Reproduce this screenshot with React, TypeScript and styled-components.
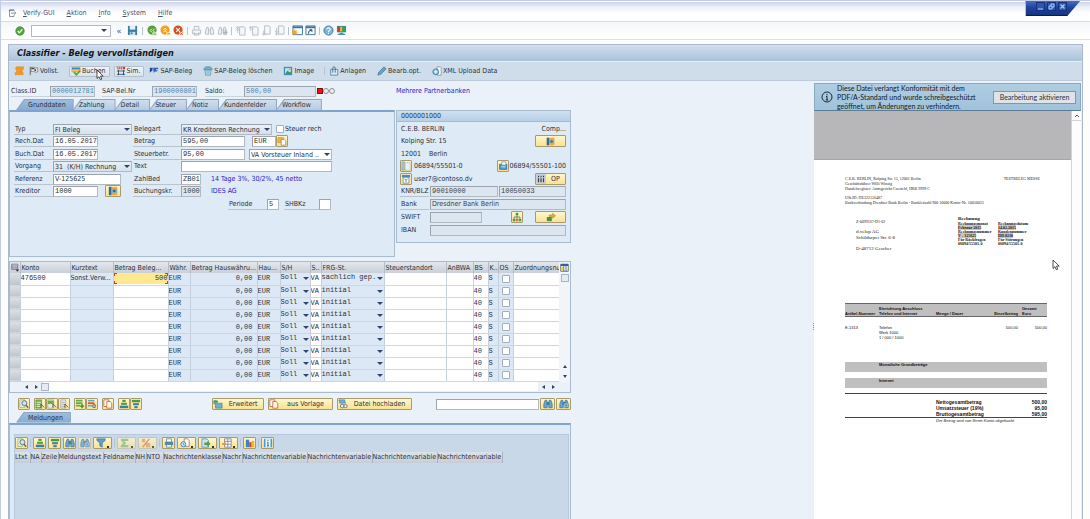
import React from "react";
import styled, { createGlobalStyle, css } from "styled-components";

const UI = `"DejaVu Sans Condensed", "Noto Sans", sans-serif`;
const MONO = `"Liberation Mono", monospace`;
const PANEL = "#deeaf6";
const LINE = "#a9bccf";
const YELLOW = "linear-gradient(#fff6cf, #f8e391)";

const Global = createGlobalStyle`
  *, *::before, *::after { box-sizing: border-box; }
  body { margin: 0; background: #fff; font: 7px/10px ${UI}; color: #2b3038; }
  button, input, select { font: inherit; color: inherit; margin: 0; padding: 0; border: 0; border-radius: 0; background: none; }
  a { color: inherit; text-decoration: none; }
`;

/* ---------- icons ---------- */

const icons: Record<string, React.ReactNode> = {
  menu: <><path d="M8 3V1H2v9h6V8" fill="none" stroke="#66748c" /><path d="M4 5.500h6M8.500 3.500l2 2-2 2" fill="none" stroke="#66748c" /><path d="M1 2h6" stroke="#66748c" /></>,
  ok: <><circle cx="6" cy="6" r="5" fill="#4fa83a" stroke="#3c8a2c" /><path d="M3.200 6l2 2.200 3.600-4.200" fill="none" stroke="#fff" strokeWidth="1.600" /></>,
  save: <><path d="M1 1h10v10H1z" fill="#3d7ea6" /><path d="M3 1h6v4H3z" fill="#e8f3fa" /><path d="M3 7.500h6V11H3z" fill="#cfe0ea" /><path d="M4 8h2v2H4z" fill="#3d7ea6" /></>,
  back: <><circle cx="5.500" cy="5.500" r="5" fill="#55a32f" /><path d="M5.500 4L3.500 6l2 2M8.500 4l-2 2 2 2" stroke="#fff" fill="none" /><path d="M6 8h5v3.500H6z" fill="#dff0d4" /><path d="M7 10h3" stroke="#55a32f" /></>,
  exit: <><circle cx="5.500" cy="5.500" r="5" fill="#f0a01e" /><path d="M3.500 5.500l2-2 2 2M3.500 8l2-2 2 2" stroke="#fff" fill="none" /><path d="M7 8h4.500v3.500H7z" fill="#fde9c0" /><path d="M8 9.500h3" stroke="#e08a10" /></>,
  cancel: <><circle cx="5.500" cy="5.500" r="5" fill="#d8501e" /><path d="M3.500 3.500l4 4M7.500 3.500l-4 4" stroke="#fff" strokeWidth="1.200" /><path d="M7 7.500h4.500v4H7z" fill="#fbe2d6" /><path d="M8 8.500l2.500 2M10.500 8.500l-2.500 2" stroke="#d8501e" /></>,
  printGrey: <><path d="M3.500 5V1.500h5V5M1.500 5.500h9v4h-9zM3.500 8v3h5V8" fill="#f4f5f7" stroke="#b5bac2" /></>,
  findGrey: <path d="M3 2.500h1.500l.5 3v4.500H1.500V7zM7.500 2.500H9L10.500 7v3H7V5.500zM5 5.500h2" fill="#eef0f3" stroke="#b5bac2" />,
  findNextGrey: <><path d="M3 2.500h1.500l.5 3v4.500H1.500V7zM7.500 2.500H9L10.500 7v3H7V5.500zM5 5.500h2" fill="#eef0f3" stroke="#b5bac2" /><path d="M9 5v6M6.500 8h5" stroke="#a4abb5" /></>,
  pgFirst: <><path d="M5 2h5l1 1v8H5z" fill="#f6f7f9" stroke="#b5bac2" /><path d="M3 1.500v7M1 3.500l2-2 2 2M1 6l2-2 2 2" stroke="#b5bac2" fill="none" /></>,
  pgUp: <><path d="M5 2h5l1 1v8H5z" fill="#f6f7f9" stroke="#b5bac2" /><path d="M3 1.500v5M1 3.500l2-2 2 2" stroke="#b5bac2" fill="none" /></>,
  pgDown: <><path d="M4 1h5l1 1v8H4z" fill="#f6f7f9" stroke="#b5bac2" /><path d="M3 6v5M1 9l2 2 2-2" stroke="#b5bac2" fill="none" /></>,
  pgLast: <><path d="M5 1h5l1 1v8H5z" fill="#f6f7f9" stroke="#b5bac2" /><path d="M3 3v8M1 6.500l2 2 2-2M1 9l2 2 2-2" stroke="#b5bac2" fill="none" /></>,
  session: <><path d="M1 1h10.500v9.500H1z" fill="#f5f9fc" stroke="#3d7494" /><path d="M1 1.500h10.500v2H1z" fill="#3d7494" /><path d="M3 5v6M0 8h6M1 6l4 4M5 6l-4 4" stroke="#f2a21c" strokeWidth="1.100" /></>,
  shortcut: <><path d="M1 1h10v9.500H1z" fill="#f5f9fc" stroke="#3d7494" /><path d="M1 1.500h10v2H1z" fill="#3d7494" /><path d="M4 9.500V7l3-1.500M5 5.200h2.500v2.300" stroke="#333" fill="none" /></>,
  help: <><circle cx="6" cy="6" r="5" fill="#7fb1d4" stroke="#3f7ea8" /><path d="M4.200 4.800c0-2.400 3.800-2.200 3.600.2-.1 1.200-1.800 1.200-1.800 2.500M6 8.500v1.300" stroke="#fff" strokeWidth="1.200" fill="none" /></>,
  monitor: <><path d="M1 1h10v7H1z" fill="#3b8f8c" /><path d="M2 2h2.500v5H2z" fill="#d23a2a" /><path d="M4.500 2H7v5H4.500z" fill="#f4b72a" /><path d="M7 2h3v5H7z" fill="#3f9c4a" /><path d="M4 8.500h4v1h2V11H2V9.500h2z" fill="#4d8fa5" /></>,
  scroll: <path d="M3 1h8.500v3H10v4h1v2.500H1.500L1 8h2V4H2V2z" fill="#f2991f" stroke="#d97d10" strokeWidth=".5" />,
  flag: <><path d="M1.500 1v10" stroke="#555" /><path d="M2.500 1.500h3l3 1 2-.5v5l-2 .5-3-1h-3z" fill="#f2f2f2" stroke="#555" strokeWidth=".7" /><path d="M3 2h2v2H3zM6.500 4h2v2h-2zM5 2.500h1.500V4H5z" fill="#444" /></>,
  post: <><path d="M1 2h10v5H1z" fill="#f5c451" stroke="#b8902c" strokeWidth=".6" /><path d="M1 2h10v2H1z" fill="#4a87b5" /><path d="M3.500 7l3 3.500 4.500-5" fill="none" stroke="#5aa62f" strokeWidth="2" /></>,
  sim: <><path d="M1 1h10v3H1z" fill="#c23b33" /><path d="M2.500 1v3M5 1v3M7.500 1v3" stroke="#fff" /><path d="M1 6h10M1 10h10" stroke="#2f6fa5" strokeWidth="1.200" /><path d="M3 5v6M9 5v6" stroke="#333" /></>,
  bf: <><path d="M1 2h3.500l-.5 3.500L1 8z" fill="#20479a" /><path d="M5 2h6v2H8.500v1H10v1.500H7L5.500 8.500z" fill="#2f62b8" /></>,
  trash: <><path d="M1 3l2.500-2h5L11 3v1.500H1z" fill="#72b0cc" stroke="#3f87a6" strokeWidth=".7" /><path d="M2.500 5h7L9 11H3z" fill="#cfe6f0" stroke="#3f87a6" strokeWidth=".8" /><path d="M5 6v4M7 6v4" stroke="#3f87a6" strokeWidth=".7" /></>,
  image: <><path d="M1 1h10v10H1z" fill="#3e8fc0" /><path d="M2.500 2.500h7v7h-7z" fill="#bfe2f3" /><path d="M2.500 9.500l3-4 2 2 2-1v3z" fill="#3d9b45" /><circle cx="8" cy="4" r="1.200" fill="#f5a623" /></>,
  clip: <><path d="M2 4h8.500v7H2z" fill="#d8e9f3" stroke="#4a86a8" /><path d="M4.500 8V2.500a1.500 1.500 0 013 0V8" fill="none" stroke="#47698a" /></>,
  pencil: <path d="M1 11l1-3.500L8.500 1 11 3.500 4.500 10z" fill="#5fa4c8" stroke="#33708f" strokeWidth=".7" />,
  xml: <><path d="M6 1h4l1 1v9H6z" fill="#fff" stroke="#777" strokeWidth=".8" /><circle cx="4.500" cy="7" r="3.500" fill="#8fc2dd" stroke="#34789b" /><path d="M2.500 7h4M4.500 5v4" stroke="#fff" /></>,
  match: <><path d="M1 1h10v10H1z" fill="#f3a73b" /><path d="M1 1h3v10H1z" fill="#2f6d98" /><path d="M4 2l4 4-4 4zM11 2L8 6l3 4z" fill="#79b2d4" /><circle cx="7.500" cy="6" r="1.700" fill="#356f95" /></>,
  paste: <><path d="M1 2h7v6H1z" fill="#f4b43c" stroke="#c7861c" strokeWidth=".7" /><path d="M5 4h3.500L10.500 6v5H5z" fill="#fff" stroke="#777" strokeWidth=".8" /></>,
  phone: <><path d="M1 1h3v10H1z" fill="#a9c3d4" stroke="#78909f" strokeWidth=".6" /><path d="M5 2h6v9H5z" fill="#eaf1f5" stroke="#9aabb5" strokeWidth=".6" /></>,
  fax: <><path d="M2 4h8.500v6H2z" fill="#5b9cc2" stroke="#2f6f94" /><path d="M4.500 1h5v4h-5z" fill="#f6fbfd" stroke="#4f7f99" strokeWidth=".7" /><path d="M4 7h5" stroke="#e4f2f9" /></>,
  mail: <><path d="M1 1h10v3H1z" fill="#4f8fae" /><path d="M2.500 4h7v7h-7z" fill="#fff" stroke="#48788f" strokeWidth=".8" /><path d="M4 5.500l2 2 2-2M6 7.500V10" stroke="#3d7a9c" fill="none" /></>,
  bars: <><path d="M0 0h12v12H0z" fill="#c8cfd8" /><path d="M3 2v2M6 2v2M9 2v2M3 5v5M6 5v5M9 5v5" stroke="#333c4a" strokeWidth="1.400" /></>,
  tree: <><path d="M4.500 1h3v3h-3z" fill="#3e9b4c" /><path d="M6 4v2M2.500 8V6h7v2M6 6v2" stroke="#555" fill="none" strokeWidth=".8" /><path d="M1 8h3v3H1zM8 8h3v3H8z" fill="#3e9b4c" /><path d="M4.800 8h2.400v3H4.800z" fill="#d9703a" /></>,
  goto: <><path d="M1 6h6v5H1z" fill="#4e8f45" /><path d="M4 5h4V3l3.500 3L8 9V7H4z" fill="#f1ae26" stroke="#7f7420" strokeWidth=".5" transform="translate(0 -1.500)" /></>,
  magnifier: <><path d="M1 1h6v9H1z" fill="#e4f0da" stroke="#6c9a55" strokeWidth=".6" /><circle cx="6.500" cy="5" r="3" fill="#cde3ee" stroke="#55666f" /><path d="M8.500 7.500L11 10.500" stroke="#55666f" strokeWidth="1.500" /></>,
  selAll: <><path d="M1 1h7v10H1z" fill="#78b64f" stroke="#4f8a2e" strokeWidth=".6" /><path d="M2 4h5M2 6.500h5M2 9h5" stroke="#e8f5dd" /><path d="M7 6l4 4M7 6v4.500" stroke="#555" fill="none" /></>,
  selBlock: <><path d="M1 1h7v10H1z" fill="#e8eee2" stroke="#7f8a77" strokeWidth=".6" /><path d="M1 2h7v4H1z" fill="#6db03f" /><path d="M7 6l4 4M7 6v4.500" stroke="#555" fill="none" /></>,
  deselect: <><path d="M2 1h6v10H2z" fill="#e3e6e4" stroke="#8b9190" strokeWidth=".6" /><path d="M3 4h4M3 6.500h4M3 9h4" stroke="#a6adac" /><path d="M7 6l4 4M7 6v4.500" stroke="#555" fill="none" /></>,
  insRow: <><path d="M1 1h8v2H1zM1 4h8v2H1zM1 7h5v2H1z" fill="#69a848" /><path d="M8.500 6v5M6 8.500h5" stroke="#3c8a2c" strokeWidth="1.600" /></>,
  delRow: <><path d="M1 1h8v2H1z" fill="#69a8c0" /><path d="M1 4h8v2H1z" fill="#d8552c" /><path d="M1 7h5v2H1z" fill="#69a8c0" /><circle cx="8.500" cy="8.500" r="2.500" fill="#777" /><path d="M7 8.500h3" stroke="#fff" /></>,
  copy: <><path d="M1 1h6v8H1z" fill="#fff" stroke="#c0562c" strokeWidth=".9" /><path d="M4.500 3h4L10.500 5v6h-6z" fill="#fff8e8" stroke="#c0562c" strokeWidth=".9" /></>,
  sortUp: <><path d="M4 1h4v2.500H4z" fill="#4c9b3c" /><path d="M2.500 4.500h7V7h-7z" fill="#4c9b3c" /><path d="M1 8h10v3H1z" fill="#3f7f9f" /></>,
  sortDown: <><path d="M1 1h10v3H1z" fill="#4c9b3c" /><path d="M2.500 5h7v2.500h-7z" fill="#3f7f9f" /><path d="M4 8.500h4V11H4z" fill="#3f7f9f" /></>,
  find: <path d="M2.500 1.500h2l.5 3v6H1V6zM7.500 1.500h2L11 6v4.500H7v-6zM5 4h2v3H5z" fill="#6fa8cb" stroke="#2f6c93" strokeWidth=".8" />,
  findNext: <><path d="M2.500 1.500h2l.5 3v6H1V6zM7.500 1.500h2L11 6v4.500H7v-6zM5 4h2v3H5z" fill="#6fa8cb" stroke="#2f6c93" strokeWidth=".8" /><circle cx="8.500" cy="7.500" r="2.800" fill="#e5f1f8" stroke="#2f6c93" strokeWidth=".6" /><path d="M8.500 5.500v4M6.500 7.500h4" stroke="#2f6c93" /></>,
  filter: <path d="M1 1h10v2L7.500 6v5l-3-1.500V6L1 3z" fill="#5d9fc9" stroke="#2f6c93" strokeWidth=".7" />,
  sum: <path d="M1 1h9v2.500H5L7.500 6 5 8.500h5V11H1V9l3-3-3-3z" fill="#8fc07a" />,
  subtotal: <><path d="M1 1h4v4H1zM6 6h5v5H6z" fill="#f0a05a" /><path d="M10 1L2 11" stroke="#d97a3a" strokeWidth="1.500" /></>,
  print: <><path d="M3 1h6v4H3z" fill="#fff" stroke="#3d7494" strokeWidth=".8" /><path d="M1 4.500h10v4H1z" fill="#4d8bae" /><path d="M3 8h6v3H3z" fill="#fff" stroke="#3d7494" strokeWidth=".8" /></>,
  views: <><path d="M5 1h4l2 2v7H5z" fill="#fff" stroke="#667" strokeWidth=".8" /><circle cx="4" cy="7.500" r="3" fill="#d8ebf4" stroke="#3d7494" /><path d="M4 6v2h1.500" stroke="#3d7494" fill="none" strokeWidth=".8" /></>,
  export: <><path d="M1 1h6l2 2v8H1z" fill="#cfe2ee" stroke="#4a7d9c" strokeWidth=".8" /><path d="M4 5.500h3.500v-2L11.500 7l-4 3.500v-2H4z" fill="#4fa03a" /></>,
  layout: <><path d="M3 1h8v10H3z" fill="#fff" stroke="#667" strokeWidth=".8" /><path d="M3 4h8M3 7.500h8M7 1v10" stroke="#667" strokeWidth=".8" /><path d="M0 6h3V4.500L5.500 7 3 9.500V8H0z" fill="#f08f2e" /></>,
  chart: <><path d="M1 2h4v9H1z" fill="#3f85b5" /><path d="M5 5h3v6H5z" fill="#d8452c" /><path d="M8 3.500h3V11H8z" fill="#f4b42d" /></>,
  info: <><path d="M1 1h10v10H1z" fill="#4a9cc7" /><path d="M3 1h6v10H3z" fill="#e7f4fb" /><path d="M6 2v1.600M6 5v4.500M5 5.300h1M4.800 9.500h2.400" stroke="#1f6f9c" strokeWidth="1.200" /></>,
  detail: <><path d="M1 2h3v3h7v6H3V6H1z" fill="#6fb0c6" stroke="#2c7083" strokeWidth=".6" /><path d="M1 2h5v2H1z" fill="#4c9b3c" /></>,
  upload: <><path d="M1 1h7l1 4H2z" fill="#6faed0" stroke="#3d7494" strokeWidth=".6" /><circle cx="5" cy="8.500" r="2.200" fill="#e5f1f8" stroke="#667" /><circle cx="9" cy="8.500" r="2" fill="#e5f1f8" stroke="#667" /></>,
  columns: <><path d="M1 2h10v9H1z" fill="#fff" stroke="#234" strokeWidth=".9" /><path d="M1 1h10v3H1z" fill="#2f5fa8" /><path d="M2 5h2v5H2z" fill="#f3d13c" /><path d="M5 4v7M8 4v7" stroke="#234" strokeWidth=".9" /></>,
  rowList: <><path d="M1 1.500h8v7H1zM1 4h8M1 6.500h8" fill="none" stroke="#555e6c" strokeWidth=".9" /><path d="M6 8.500h5l-2.500 3z" fill="#333" /></>,
};

const Svg = styled.svg<{ $s: number }>`
  display: block;
  flex: none;
  width: ${(p) => p.$s}px;
  height: ${(p) => p.$s}px;
`;
const Icon = ({ n, s = 10 }: { n: string; s?: number }) => (
  <Svg $s={s} viewBox="0 0 12 12" aria-hidden="true">{icons[n]}</Svg>
);

/* ---------- window frame ---------- */

const Window = styled.div`
  position: relative;
  display: flex;
  flex-direction: column;
  min-height: 100vh;
  border-left: 1px solid #c3cbe2;
  border-top: 1px solid #c3cbe6;
  background: #fdfdfe;
  overflow: hidden;
`;
const MenuBar = styled.nav`
  display: flex;
  align-items: center;
  gap: 12px;
  height: 21px;
  padding: 3px 7px 0;
  border-top: 1px solid #fff;
  border-bottom: 1px solid #d9dde6;
  background: linear-gradient(#ccd5ea, #eceff8 25%, #fff 60%);
  color: #46536e;
`;
const MenuButton = styled.button`
  &::first-letter { text-decoration: underline; }
`;
const MenuIcon = styled.span`
  margin-right: -6px;
`;
const StdBar = styled.div`
  display: flex;
  align-items: center;
  height: 18px;
  padding-left: 12px;
  border-bottom: 1px solid #dcdfe4;
  background: linear-gradient(#f4f7fa, #fff);
`;
const ToolButton = styled.button`
  display: grid;
  place-items: center;
  width: 13px;
  height: 12px;
`;
const CommandBox = styled.div`
  display: grid;
  grid-template-columns: 100%;
  align-items: center;
  width: 80px;
  margin: 0 4px 0 5px;
  > * { grid-area: 1 / 1; }
`;
const CommandInput = styled.input`
  width: 100%;
  height: 12px;
  padding: 0 12px 0 2px;
  border: 1px solid #b3b7bf;
  background: #fff;
`;
const Triangle = styled.span`
  justify-self: end;
  margin-right: 4px;
  border: 3px solid transparent;
  border-top: 3px solid #2e4468;
  border-bottom: 0;
  pointer-events: none;
`;
const Divider = styled.i<{ $m?: number }>`
  flex: none;
  width: 1px;
  height: 8px;
  margin: 0 ${(p) => p.$m ?? 2}px;
  background: #b6c3d0;
`;
const Collapse = styled.button`
  width: 8px;
  margin-right: 3px;
  font-size: 9px;
  color: #4b5565;
`;

const WindowControls = styled.div`
  position: absolute;
  top: -1px;
  right: 9px;
  width: 57px;
  height: 16px;
  display: flex;
  justify-content: flex-start;
  gap: 2px;
  padding: 2px 12px;
  background: linear-gradient(#4b74c8, #1f449c 50%, #17367f);
  border-bottom: 1px solid #0c1d4d;
  clip-path: polygon(0 0, 100% 0, 76% 100%, 3% 100%, 3% 12%);
`;
const ControlButton = styled.button`
  display: grid;
  place-items: center;
  width: 9px;
  height: 9px;
  border: 1px solid #16347e;
  background: #2c56b0;
`;

/* ---------- screen ---------- */

const Screen = styled.main`
  flex: 1;
  display: flex;
  flex-direction: column;
  margin: 4px 7px 0;
  border: 1px solid #a9b8cb;
  border-bottom: 0;
  background: #ebf1f8;
`;
const Title = styled.h1`
  margin: 0;
  padding: 0 8px;
  font: italic bold 9px/16px ${UI};
  color: #10151c;
  background: linear-gradient(#d3deee, #a9c3da);
`;
const AppBar = styled.div`
  display: flex;
  align-items: center;
  height: 20px;
  padding-left: 4px;
  border-top: 1px solid #e5edf5;
  border-bottom: 1px solid #bdcbdc;
  background: #cfdce9;
`;
const AppButton = styled.button<{ $raised?: boolean; $after?: number }>`
  display: flex;
  align-items: center;
  gap: 1px;
  height: 11px;
  margin-right: ${(p) => p.$after ?? 4}px;
  padding: 0 2px 0 0;
  white-space: nowrap;
  border: 1px solid transparent;
  ${(p) => p.$raised && css`
    padding: 0 3px 0 1px;
    border-color: #b4bfcd;
    border-radius: 1px;
    background: linear-gradient(#eef3f8, #d9e3ee);
  `}
`;

const Workspace = styled.div`
  flex: 1;
  display: grid;
  grid-template-columns: minmax(564px, 1fr) 268px;
  gap: 2px;
`;
const Left = styled.div`
  display: flex;
  flex-direction: column;
  width: 562px;
`;

const KeyRow = styled.div`
  display: flex;
  align-items: center;
  height: 18px;
  padding: 2px 0 0 2px;
`;
const KeyLabel = styled.label<{ $w: number; $ml?: number }>`
  width: ${(p) => p.$w}px;
  height: 11px;
  margin-left: ${(p) => p.$ml ?? 0}px;
  border-bottom: 1px solid #cad4df;
  white-space: nowrap;
`;
const BankLink = styled.a`
  margin-left: 61px;
  color: #2a22c8;
  white-space: nowrap;
`;
const Lights = styled.span`
  display: flex;
  align-items: center;
  margin-left: 1px;
`;
const Light = styled.i<{ $on?: boolean }>`
  width: 6px;
  height: 6px;
  border: 1px solid ${(p) => (p.$on ? "#7d1010" : "#8c8f94")};
  border-radius: ${(p) => (p.$on ? 0 : "3px")};
  background: ${(p) => (p.$on ? "#ee1212" : "#eceff2")};
`;

const fieldBox = css`
  height: 11px;
  border: 1px solid #b3b9c1;
  border-top-color: #9aa3ae;
  border-left-color: #9aa3ae;
`;
const Field = styled.input<{ $w: number; $ml?: number; $ui?: boolean; $blue?: boolean }>`
  ${fieldBox}
  width: ${(p) => p.$w}px;
  flex: none;
  margin-left: ${(p) => p.$ml ?? 0}px;
  padding: 0 0 0 1px;
  font-family: ${(p) => (p.$ui ? UI : MONO)};
  background: #fff;
  color: #2b3038;
  &:read-only {
    background: #dbe6f1;
    color: ${(p) => (p.$blue ? "#4c86b4" : "#39424e")};
  }
`;
const SelectShell = styled.span<{ $w: number; $ml?: number; $white?: boolean }>`
  ${fieldBox}
  display: grid;
  flex: none;
  width: ${(p) => p.$w}px;
  align-items: center;
  margin-left: ${(p) => p.$ml ?? 0}px;
  background: ${(p) => (p.$white ? "#fff" : "linear-gradient(#e9f0f7, #d5e1ed)")};
  > * { grid-area: 1 / 1; }
  ${Triangle} { margin-right: 1px; }
`;
const Select = styled.select`
  appearance: none;
  display: block;
  width: 100%;
  height: 9px;
  padding: 0 7px 0 1px;
  outline: 0;
  white-space: nowrap;
`;
const Drop = (p: { id: string; w: number; ml?: number; white?: boolean; label?: string; value: string }) => (
  <SelectShell $w={p.w} $ml={p.ml} $white={p.white}>
    <Select id={p.id} aria-label={p.label}><option>{p.value}</option></Select>
    <Triangle />
  </SelectShell>
);

/* ---------- tabs and panels ---------- */

const TabRow = styled.div`
  display: flex;
  padding-left: 7px;
  height: 11px;
`;
const Tab = styled.button<{ $active?: boolean }>`
  display: grid;
  clip-path: polygon(0 100%, 8px 0, 100% 0, 100% 100%);
  background: #8fa6bf;
  padding: 1px 1px 0 0;
  margin-right: -1px;
  > span {
    padding: ${(p) => (p.$active ? "0 7px 0 12px" : "0 10px 0 6px")};
    clip-path: polygon(1px 100%, 9px 0, 100% 0, 100% 100%);
    background: ${(p) => (p.$active ? "linear-gradient(#9bbce0, #85acd6)" : "linear-gradient(#d0deed, #b7cbe0)")};
  }
`;
const Panels = styled.div`
  display: grid;
  grid-template-columns: 386px 175px;
  gap: 1px;
  align-items: start;
`;
const FormPanel = styled.section`
  height: 147px;
  border: 1px solid ${LINE};
  border-top: 2px solid #7fa3cc;
  background: ${PANEL};
  padding: 11px 4px 0;
  display: grid;
  grid-template-columns: 118px 200px;
  gap: 1px;
`;
const Rows = styled.div`
  display: grid;
  grid-template-rows: 12px 13px 12px 13px 12px 13px;
  grid-auto-rows: 13px;
`;
const Row = styled.div`
  display: flex;
  align-items: center;
  height: 12px;
`;
const Label = styled.label<{ $w: number; $plain?: boolean; $ml?: number }>`
  flex: none;
  width: ${(p) => p.$w}px;
  height: 11px;
  margin-left: ${(p) => p.$ml ?? 0}px;
  padding-left: 1px;
  border-bottom: 1px solid ${(p) => (p.$plain ? "transparent" : "#b9c4cf")};
  white-space: nowrap;
`;
const Check = styled.input`
  appearance: none;
  flex: none;
  width: 8px;
  height: 8px;
  border: 1px solid #a4adb8;
  border-radius: 1px;
  background: #fff;
`;
const CheckLabel = styled.label`
  display: flex;
  align-items: center;
  gap: 1px;
  margin-left: 4px;
  white-space: nowrap;
`;
const Blue = styled.span`
  margin-left: 10px;
  color: #2a22c8;
  white-space: nowrap;
`;
const YButton = styled.button<{ $w?: number; $ml?: number }>`
  display: flex;
  flex: none;
  align-items: center;
  justify-content: center;
  width: ${(p) => p.$w ?? 12}px;
  height: 12px;
  margin-left: ${(p) => p.$ml ?? 0}px;
  border: 1px solid #a99a6a;
  border-radius: 1px;
  background: ${YELLOW};
  white-space: nowrap;
  &:disabled { border-color: #c9bf9f; opacity: 0.75; }
`;
const ButtonText = styled.span`
  flex: 1;
  text-align: center;
`;
const Card = styled.section`
  min-height: 133px;
  border: 1px solid ${LINE};
  background: ${PANEL};
`;
const CardHead = styled.h2`
  margin: 0 0 1px;
  padding-left: 4px;
  font: 7px/10px ${UI};
  border-bottom: 1px solid #a3bad3;
  background: linear-gradient(#cfe0f1, #b7cfe7);
`;
const CardRows = styled(Rows)`
  padding: 0 4px 0 3px;
`;
const CardRow = styled(Row)`
  gap: 1px;
`;
const Push = styled.span`
  flex: 1;
  padding-left: 1px;
  white-space: nowrap;
`;

/* ---------- item table ---------- */

const GridBox = styled.section`
  margin-top: 4px;
  border: 1px solid ${LINE};
  background: #e8eff7;
  display: grid;
  grid-template-columns: 549px 1fr;
`;
const Items = styled.table`
  table-layout: fixed;
  width: 549px;
  border-collapse: collapse;
  th {
    height: 11px;
    padding: 0 0 0 1px;
    font-weight: normal;
    text-align: left;
    white-space: nowrap;
    overflow: hidden;
    background: linear-gradient(#e3e7ec, #c9cfd8);
    border-right: 1px solid #b5bcc6;
  }
  td {
    height: 12px;
    padding: 0;
    font: 7px/11px ${MONO};
    border-right: 1px solid #c5cedb;
    border-bottom: 1px solid #cfd6df;
    white-space: nowrap;
    overflow: hidden;
  }
`;
const Cell = styled.td<{ $edit?: boolean; $right?: boolean; $ui?: boolean }>`
  background: ${(p) => (p.$edit ? "#fff" : "#dce8f5")};
  text-align: ${(p) => (p.$right ? "right" : "left")};
  && { font-family: ${(p) => (p.$ui ? UI : MONO)}; padding-right: ${(p) => (p.$right ? 4 : 0)}px; }
`;
const RowHead = styled.td`
  background: linear-gradient(#dde1e6, #bfc5cd);
`;
const CellInput = styled.input<{ $focus?: boolean }>`
  display: block;
  width: 100%;
  height: 11px;
  outline: 0;
  ${(p) => p.$focus && css`
    text-align: right;
    background:
      linear-gradient(#c8402c, #c8402c) 0 0 / 3px 1px no-repeat,
      linear-gradient(#c8402c, #c8402c) 0 0 / 1px 3px no-repeat,
      linear-gradient(#c8402c, #c8402c) 100% 0 / 3px 1px no-repeat,
      linear-gradient(#c8402c, #c8402c) 100% 0 / 1px 3px no-repeat,
      linear-gradient(#c8402c, #c8402c) 0 100% / 3px 1px no-repeat,
      linear-gradient(#c8402c, #c8402c) 0 100% / 1px 3px no-repeat,
      linear-gradient(#c8402c, #c8402c) 100% 100% / 3px 1px no-repeat,
      linear-gradient(#c8402c, #c8402c) 100% 100% / 1px 3px no-repeat,
      #ffe88f;
  `}
`;
const CellSelect = styled.span`
  display: grid;
  height: 11px;
  align-items: center;
  > * { grid-area: 1 / 1; }
  ${Select} { height: 11px; padding-left: 0; align-self: start; line-height: 9px; padding-bottom: 2px; }
  ${Triangle} { margin-right: 1px; }
`;
const CellCheck = styled(Check)`
  display: block;
  margin: 0 auto;
`;
const VScroll = styled.div`
  display: flex;
  flex-direction: column;
  align-items: center;
  background: #f1f5fa;
`;
const Thumb = styled.button`
  width: 8px;
  height: 8px;
  border: 1px solid #a9b5c4;
  background: #e4ebf3;
`;
const Corner = styled.button`
  margin: 1px 0 2px;
`;
const Spacer = styled.span`
  flex: 1;
`;
const Arrow = styled.button<{ $d: "up" | "down" | "left" | "right" }>`
  display: grid;
  place-items: center;
  width: 10px;
  height: 10px;
  &::before {
    content: "";
    border: 2px solid transparent;
    ${(p) => p.$d === "up" && "border-bottom: 3px solid #34435a; border-top: 0;"}
    ${(p) => p.$d === "down" && "border-top: 3px solid #34435a; border-bottom: 0;"}
    ${(p) => p.$d === "left" && "border-right: 3px solid #34435a; border-left: 0;"}
    ${(p) => p.$d === "right" && "border-left: 3px solid #34435a; border-right: 0;"}
  }
`;
const HScroll = styled.div`
  grid-column: 1 / -1;
  display: flex;
  align-items: center;
  height: 10px;
  padding: 0 12px 0 11px;
  background: linear-gradient(#fff, #fff) 34px 0 / calc(100% - 66px) 9px no-repeat, #eaf1f8;
`;

const ActionRow = styled.div`
  display: flex;
  align-items: center;
  height: 19px;
  padding: 4px 0 0 9px;
`;

/* ---------- messages ---------- */

const Messages = styled.section`
  flex: 1;
  padding: 9px 1px 0 4px;
  border: 1px solid ${LINE};
  border-top: 2px solid #7fa3cc;
  border-bottom: 0;
  background: ${PANEL};
  display: flex;
`;
const Alv = styled.div`
  flex: 1;
  padding: 1px 0;
  background: #c8d8e8;
  border: 1px solid #b8c9dc;
  border-bottom: 0;
`;
const AlvBar = styled.div`
  display: flex;
  align-items: center;
  gap: 2px;
  height: 14px;
`;
const MenuMark = styled.i`
  margin-left: 1px;
  align-self: end;
  border: 1px solid #333;
`;
const AlvTable = styled.table`
  table-layout: fixed;
  width: 487px;
  border-collapse: collapse;
  margin-top: 2px;
  th {
    height: 11px;
    padding: 0;
    font-weight: normal;
    text-align: left;
    white-space: nowrap;
    border-right: 1px solid #a9b3c0;
    background: linear-gradient(#dde2e9, #c6cdd8);
  }
`;

/* ---------- document preview ---------- */

const Preview = styled.aside`
  display: flex;
  flex-direction: column;
  margin-top: 2px;
  margin-right: 1px;
  background: #fff;
`;
const Notice = styled.div`
  display: flex;
  align-items: center;
  height: 28px;
  padding: 0 4px 0 6px;
  border: 1px solid #8aa9bf;
  border-bottom-color: #5d7b92;
  background: linear-gradient(#afcde2, #9fc3dc);
`;
const NoticeText = styled.p`
  flex: 1;
  margin: 0 0 0 4px;
  font: 7px/9px Lato, sans-serif;
  white-space: nowrap;
  color: #10181f;
`;
const NoticeButton = styled.button`
  width: 83px;
  height: 13px;
  border: 1px solid #8d9499;
  background: #dfe3e6;
  font: 7px/10px Lato, sans-serif;
  white-space: nowrap;
`;
const Doc = styled.div`
  flex: 1;
  display: grid;
  grid-template-columns: 1fr 10px;
`;
const DocScroll = styled.div`
  border-left: 1px solid #d0d3d8;
  background: #fdfdfe;
`;
const DocScrollUp = styled.button`
  display: grid;
  place-items: center;
  width: 9px;
  height: 10px;
  border-bottom: 1px solid #d0d3d8;
`;
const Void = styled.div`
  height: 49px;
  background: #b7b6b8;
  border-bottom: 1px solid #a5a5a7;
`;
const Paper = styled.article`
  padding: 16px 24px 0 31px;
  font: 4px/5px "Liberation Serif", serif;
  color: #222;
`;
const Split = styled.div`
  display: flex;
  justify-content: space-between;
`;
const Para = styled.p<{ $mt?: number; $size?: number; $pr?: number }>`
  margin: ${(p) => p.$mt ?? 0}px 0 0;
  padding-right: ${(p) => p.$pr ?? 0}px;
  white-space: nowrap;
  ${(p) => p.$size && css`font-size: ${p.$size}px; line-height: 6px;`}
`;
const Address = styled.div`
  flex: 1;
  padding-left: 11px;
`;
const Facts = styled.div`
  width: 89px;
  margin-top: -2px;
  font-weight: bold;
  line-height: 4px;
  color: #111;
`;
const FactGrid = styled.div`
  display: grid;
  grid-template-columns: 40px 1fr;
  white-space: nowrap;
`;
const Mark = styled.mark`
  color: inherit;
  background: #c6c6c6;
`;
const Lines = styled.table`
  width: 100%;
  margin-top: 51px;
  border-collapse: collapse;
  table-layout: fixed;
  font: 4px/5px "Liberation Sans", sans-serif;
  color: #111;
  th, td { padding: 0; text-align: left; vertical-align: top; white-space: nowrap; }
  th { height: 13px; padding-top: 1px; vertical-align: bottom; background: #bfbfbf; border-top: 1px solid #666; border-bottom: 1px solid #666; }
  th:nth-child(4), td:nth-child(4), td:nth-child(5) { text-align: right; }
  th:nth-child(5) { padding-left: 4px; }
  td { padding-top: 8px; }
`;
const Band = styled.div<{ $mt: number }>`
  height: 10px;
  margin-top: ${(p) => p.$mt}px;
  padding-left: 34px;
  font: bold 4px/6px "Liberation Sans", sans-serif;
  background: #bfbfbf;
  color: #111;
`;
const Totals = styled.dl`
  display: grid;
  grid-template-columns: 1fr auto;
  margin: 5px 0 0;
  padding: 5px 0 0 91px;
  border-top: 1px solid #444;
  border-bottom: 1px solid #444;
  font: bold 5px/6px "Liberation Sans", sans-serif;
  color: #111;
  dd { margin: 0; text-align: right; }
`;
const Small = styled.p`
  margin: 0 0 0 91px;
  font: italic 4px/5px "Liberation Sans", sans-serif;
  white-space: nowrap;
`;

const Pointer = styled.svg<{ $x: number; $y: number }>`
  position: absolute;
  left: ${(p) => p.$x}px;
  top: ${(p) => p.$y}px;
  width: 8px;
  height: 12px;
  pointer-events: none;
`;
const Grip = styled.svg`
  position: absolute;
  left: 811px;
  top: 321px;
  width: 3px;
  height: 10px;
`;
const Cursor = ({ x, y }: { x: number; y: number }) => (
  <Pointer $x={x} $y={y} viewBox="0 0 8 12" aria-hidden="true">
    <path d="M1 1v8.500l2-1.800 1.300 3 1.500-.6-1.300-3H7.200z" fill="#fff" stroke="#222" strokeWidth=".8" />
  </Pointer>
);

/* ---------- data ---------- */

const columns: [string, number][] = [
  ["", 10], ["Konto", 50], ["Kurztext", 43], ["Betrag Beleg...", 55], ["Währ.", 22], ["Betrag Hauswähru...", 67],
  ["Hau...", 23], ["S/H", 30], ["S..", 11], ["FRG-St.", 63], ["Steuerstandort", 62], ["AnBWA", 27],
  ["BS", 15], ["K..", 10], ["OS", 15], ["Zuordnungsnu", 46],
];
const rows = Array.from({ length: 9 }, (_, i) => i);

const alvColumns: [string, number][] = [
  ["Ltxt", 15], ["NA", 11], ["Zeile", 17], ["Meldungstext", 45], ["Feldname", 32], ["NH", 11], ["NTO", 17],
  ["Nachrichtenklasse", 59], ["Nachr", 20], ["Nachrichtenvariable", 65], ["Nachrichtenvariable", 65],
  ["Nachrichtenvariable", 65], ["Nachrichtenvariable", 65],
];

type Tool = { n: string; t: string };
const toolGroups: Tool[][] = [
  [{ n: "back", t: "Zurück" }, { n: "exit", t: "Beenden" }, { n: "cancel", t: "Abbrechen" }],
  [{ n: "printGrey", t: "Drucken" }, { n: "findGrey", t: "Suchen" }, { n: "findNextGrey", t: "Weitersuchen" }],
  [{ n: "pgFirst", t: "Erste Seite" }, { n: "pgUp", t: "Vorige Seite" }, { n: "pgDown", t: "Nächste Seite" }, { n: "pgLast", t: "Letzte Seite" }],
  [{ n: "session", t: "Neuer Modus" }, { n: "shortcut", t: "Verknüpfung" }],
  [{ n: "help", t: "Hilfe" }, { n: "monitor", t: "Layout" }],
];

const alvTools: ({ n: string; menu?: boolean; off?: boolean } | null)[] = [
  { n: "magnifier" }, null, { n: "sortUp" }, { n: "sortDown" }, { n: "find" }, { n: "findNext", off: true }, { n: "filter", menu: true }, null,
  { n: "sum", menu: true, off: true }, { n: "subtotal", menu: true, off: true }, null, { n: "print" }, { n: "views", menu: true },
  { n: "export", menu: true }, { n: "layout", menu: true }, null, { n: "chart" }, null, { n: "info" },
];

export default function App() {
  return (
    <>
      <Global />
      <Window>
        <MenuBar>
          <MenuIcon><Icon n="menu" s={9} /></MenuIcon>
          {["Verify-GUI", "Aktion", "Info", "System", "Hilfe"].map((m) => <MenuButton key={m}>{m}</MenuButton>)}
        </MenuBar>
        <StdBar>
          <ToolButton aria-label="Enter"><Icon n="ok" /></ToolButton>
          <CommandBox>
            <CommandInput aria-label="Befehl" />
            <Triangle />
          </CommandBox>
          <Collapse aria-label="Einklappen">«</Collapse>
          <ToolButton aria-label="Sichern"><Icon n="save" s={11} /></ToolButton>
          {toolGroups.map((g, i) => (
            <React.Fragment key={i}>
              <Divider $m={i === 0 ? 3 : 2} />
              {g.map((t) => <ToolButton key={t.n} aria-label={t.t}><Icon n={t.n} s={11} /></ToolButton>)}
            </React.Fragment>
          ))}
        </StdBar>

        <Screen>
          <Title>Classifier - Beleg vervollständigen</Title>
          <AppBar>
            <AppButton aria-label="Protokoll" $after={1}><Icon n="scroll" /></AppButton>
            <AppButton $after={7}><Icon n="flag" />Vollst.</AppButton>
            <AppButton $raised><Icon n="post" />Buchen</AppButton>
            <AppButton $raised><Icon n="sim" />Sim.</AppButton>
            <AppButton $after={7}><Icon n="bf" />SAP-Beleg</AppButton>
            <AppButton $after={7}><Icon n="trash" />SAP-Beleg löschen</AppButton>
            <AppButton><Icon n="image" />Image</AppButton>
            <Divider $m={3} />
            <AppButton $after={7}><Icon n="clip" />Anlagen</AppButton>
            <AppButton $after={7}><Icon n="pencil" />Bearb.opt.</AppButton>
            <AppButton><Icon n="xml" />XML Upload Data</AppButton>
          </AppBar>

          <Workspace>
            <Left>
              <KeyRow>
                <KeyLabel $w={39} htmlFor="classId">Class.ID</KeyLabel>
                <Field id="classId" $w={45} $blue readOnly defaultValue="0000012781" />
                <KeyLabel $w={50} $ml={7} htmlFor="belNr">SAP-Bel.Nr</KeyLabel>
                <Field id="belNr" $w={45} $blue readOnly defaultValue="1900000801" />
                <KeyLabel $w={39} $ml={8} htmlFor="saldo">Saldo:</KeyLabel>
                <Field id="saldo" $w={72} $blue readOnly defaultValue="500,00" />
                <Lights><Light $on /><Light /><Light /></Lights>
                <BankLink href="#banken">Mehrere Partnerbanken</BankLink>
              </KeyRow>

              <TabRow>
                <Tab $active><span>Grunddaten</span></Tab>
                {["Zahlung", "Detail", "Steuer", "Notiz", "Kundenfelder", "Workflow"].map((t) => <Tab key={t}><span>{t}</span></Tab>)}
              </TabRow>
              <Panels>
                <FormPanel>
                  <Rows>
                    <Row><Label $w={39} htmlFor="typ">Typ</Label><Drop id="typ" w={79} value="FI Beleg" /></Row>
                    <Row><Label $w={39} htmlFor="rdat">Rech.Dat</Label><Field id="rdat" $w={45} defaultValue="16.05.2017" /></Row>
                    <Row><Label $w={39} htmlFor="bdat">Buch.Dat</Label><Field id="bdat" $w={45} defaultValue="16.05.2017" /></Row>
                    <Row><Label $w={39} htmlFor="vorg">Vorgang</Label><Drop id="vorg" w={79} value={"31\u00a0\u00a0(K/H) Rechnung"} /></Row>
                    <Row><Label $w={39} htmlFor="ref">Referenz</Label><Field id="ref" $w={68} $ui defaultValue="V-125625" /></Row>
                    <Row><Label $w={39} htmlFor="kred">Kreditor</Label><Field id="kred" $w={45} defaultValue="1000" /><YButton $w={16} $ml={7} aria-label="Kreditor anzeigen"><Icon n="match" s={10} /></YButton></Row>
                  </Rows>
                  <Rows>
                    <Row>
                      <Label $w={48} htmlFor="bart">Belegart</Label><Drop id="bart" w={91} value="KR Kreditoren Rechnung" />
                      <CheckLabel><Check type="checkbox" />Steuer rech</CheckLabel>
                    </Row>
                    <Row>
                      <Label $w={48} htmlFor="betrag">Betrag</Label><Field id="betrag" $w={64} defaultValue="595,00" />
                      <Field $w={24} $ml={7} aria-label="Währung" defaultValue="EUR" /><YButton aria-label="Übernehmen"><Icon n="paste" /></YButton>
                    </Row>
                    <Row>
                      <Label $w={48} htmlFor="stb">Steuerbetr.</Label><Field id="stb" $w={64} defaultValue="95,00" />
                      <Drop id="stk" w={83} ml={4} white label="Steuerkennzeichen" value="VA Vorsteuer Inland .." />
                    </Row>
                    <Row><Label $w={48} $plain htmlFor="text">Text</Label><Field id="text" $w={151} /></Row>
                    <Row><Label $w={48} htmlFor="zb">ZahlBed</Label><Field id="zb" $w={20} defaultValue="ZB01" /><Blue>14 Tage 3%, 30/2%, 45 netto</Blue></Row>
                    <Row><Label $w={48} htmlFor="bk">Buchungskr.</Label><Field id="bk" $w={20} readOnly defaultValue="1000" /><Blue>IDES AG</Blue></Row>
                    <Row>
                      <Label $w={39} $ml={95} htmlFor="per">Periode</Label><Field id="per" $w={12} defaultValue="5" />
                      <Label $w={35} $ml={5} htmlFor="shb">SHBKz</Label><Field id="shb" $w={12} />
                    </Row>
                  </Rows>
                </FormPanel>

                <Card>
                  <CardHead>0000001000</CardHead>
                  <CardRows>
                    <CardRow><Push>C.E.B. BERLIN</Push><span>Comp...</span></CardRow>
                    <CardRow><Push>Kolping Str. 15</Push><YButton $w={31} aria-label="Kreditor"><Icon n="match" s={9} /></YButton></CardRow>
                    <CardRow><Push>12001&nbsp;&nbsp;&nbsp;&nbsp;Berlin</Push></CardRow>
                    <CardRow>
                      <YButton aria-label="Telefon"><Icon n="phone" /></YButton><Push>06894/55501-0</Push>
                      <YButton aria-label="Fax"><Icon n="fax" /></YButton><span>06894/55501-100</span>
                    </CardRow>
                    <CardRow>
                      <YButton aria-label="E-Mail"><Icon n="mail" /></YButton><Push>user7@contoso.dv</Push>
                      <YButton $w={31}><Icon n="bars" s={10} /><ButtonText>OP</ButtonText></YButton>
                    </CardRow>
                    <CardRow><Label $w={29} htmlFor="knr">KNR/BLZ</Label><Field id="knr" $w={68} readOnly defaultValue="90010000" /><Field $w={67} aria-label="BLZ" readOnly defaultValue="10050033" /></CardRow>
                    <CardRow><Label $w={29} htmlFor="bank">Bank</Label><Field id="bank" $w={136} $ui readOnly defaultValue="Dresdner Bank Berlin" /></CardRow>
                    <CardRow>
                      <Label $w={29} $plain htmlFor="swift">SWIFT</Label><Field id="swift" $w={52} readOnly /><Push />
                      <YButton aria-label="Hierarchie"><Icon n="tree" /></YButton><YButton $w={31} $ml={11} aria-label="Weiter"><Icon n="goto" /></YButton>
                    </CardRow>
                    <CardRow><Label $w={29} $plain htmlFor="iban">IBAN</Label><Field id="iban" $w={136} readOnly /></CardRow>
                  </CardRows>
                </Card>
              </Panels>

              <GridBox>
                <Items>
                  <colgroup>{columns.map(([n, w], i) => <col key={n + i} width={w} />)}</colgroup>
                  <thead>
                    <tr>{columns.map(([n], i) => <th key={n + i}>{i === 0 ? <Icon n="rowList" s={9} /> : n}</th>)}</tr>
                  </thead>
                  <tbody>
                    {rows.map((r) => (
                      <tr key={r}>
                        <RowHead />
                        <Cell $edit><CellInput aria-label="Konto" defaultValue={r ? "" : "476500"} /></Cell>
                        <Cell $ui>{r ? "" : "Sonst.Verw..."}</Cell>
                        <Cell $edit><CellInput aria-label="Betrag Beleg" $focus={r === 0} defaultValue={r ? "" : "500"} /></Cell>
                        <Cell>EUR</Cell>
                        <Cell $right>0,00</Cell>
                        <Cell>EUR</Cell>
                        <Cell><CellSelect><Select aria-label="Soll/Haben"><option>Soll</option></Select><Triangle /></CellSelect></Cell>
                        <Cell $edit>VA</Cell>
                        <Cell><CellSelect><Select aria-label="Freigabestatus"><option>{r ? "initial" : "sachlich gep.."}</option></Select><Triangle /></CellSelect></Cell>
                        <Cell $edit><CellInput aria-label="Steuerstandort" /></Cell>
                        <Cell $edit><CellInput aria-label="AnBWA" /></Cell>
                        <Cell $edit>40</Cell>
                        <Cell>S</Cell>
                        <Cell><CellCheck type="checkbox" aria-label="OS" /></Cell>
                        <Cell $edit><CellInput aria-label="Zuordnungsnummer" /></Cell>
                      </tr>
                    ))}
                  </tbody>
                </Items>
                <VScroll>
                  <Corner aria-label="Konfiguration"><Icon n="columns" s={9} /></Corner>
                  <Thumb aria-label="Bildlauf" />
                  <Spacer />
                  <Arrow $d="up" aria-label="Nach oben" />
                  <Arrow $d="down" aria-label="Nach unten" />
                </VScroll>
                <HScroll>
                  <Arrow $d="left" aria-label="Nach links" />
                  <Arrow $d="right" aria-label="Nach rechts" />
                  <Thumb aria-label="Bildlauf horizontal" />
                  <Spacer />
                  <Arrow $d="left" aria-label="Nach links" />
                  <Arrow $d="right" aria-label="Nach rechts" />
                </HScroll>
              </GridBox>

              <ActionRow>
                <YButton aria-label="Detail"><Icon n="magnifier" /></YButton>
                <YButton $ml={4} aria-label="Alle markieren"><Icon n="selAll" /></YButton>
                <YButton aria-label="Block markieren"><Icon n="selBlock" /></YButton>
                <YButton aria-label="Markierung löschen"><Icon n="deselect" /></YButton>
                <YButton $ml={4} aria-label="Zeile einfügen"><Icon n="insRow" /></YButton>
                <YButton aria-label="Zeile löschen"><Icon n="delRow" /></YButton>
                <YButton $ml={4} aria-label="Kopieren"><Icon n="copy" /></YButton>
                <YButton $ml={4} aria-label="Aufsteigend"><Icon n="sortUp" /></YButton>
                <YButton aria-label="Absteigend"><Icon n="sortDown" /></YButton>
                <YButton $w={52} $ml={70}><Icon n="detail" /><ButtonText>Erweitert</ButtonText></YButton>
                <YButton $w={65} $ml={4}><Icon n="copy" /><ButtonText>aus Vorlage</ButtonText></YButton>
                <YButton $w={75} $ml={4}><Icon n="upload" /><ButtonText>Datei hochladen</ButtonText></YButton>
                <Spacer />
                <Field $w={103} aria-label="Suchbegriff" />
                <YButton $w={15} $ml={1} aria-label="Suchen"><Icon n="find" /></YButton>
                <YButton $w={15} $ml={1} aria-label="Weitersuchen"><Icon n="findNext" /></YButton>
              </ActionRow>

              <TabRow><Tab $active><span>Meldungen</span></Tab></TabRow>
              <Messages>
                <Alv>
                  <AlvBar>
                    {alvTools.map((t, i) => t === null
                      ? <Divider key={i} $m={0} />
                      : <YButton key={i} $w={t.menu ? 19 : 13} disabled={t.off} aria-label={t.n}><Icon n={t.n} />{t.menu && <MenuMark />}</YButton>)}
                  </AlvBar>
                  <AlvTable>
                    <colgroup>{alvColumns.map(([n, w], i) => <col key={n + i} width={w} />)}</colgroup>
                    <thead><tr>{alvColumns.map(([n], i) => <th key={n + i}>{n}</th>)}</tr></thead>
                  </AlvTable>
                </Alv>
              </Messages>
            </Left>

            <Preview>
              <Notice>
                <svg width="12" height="12" viewBox="0 0 12 12" aria-hidden="true">
                  <circle cx="6" cy="6" r="5" fill="none" stroke="#1c2730" strokeWidth="1" />
                  <path d="M6 3v1.300M6 5.300V9M5 5.500h1M4.800 9h2.400" stroke="#1c2730" />
                </svg>
                <NoticeText>Diese Datei verlangt Konformität mit dem<br />PDF/A-Standard und wurde schreibgeschützt<br />geöffnet, um Änderungen zu verhindern.</NoticeText>
                <NoticeButton>Bearbeitung aktivieren</NoticeButton>
              </Notice>
              <Doc>
                <div>
                  <Void />
                  <Paper>
                    <Split>
                      <Para>C.E.B. BERLIN, Kolping Str. 15, 12001 Berlin<br />Geschäftsführer Willi Winzig<br />Handelsregister: Amtsgericht Coesfeld, HRB 9999 C</Para>
                      <Para $pr={7}>TESTBELEG MESSE</Para>
                    </Split>
                    <Para $mt={4}>USt.ID: DE322156487<br />Bankverbindung Dresdner Bank Berlin - Bankleitzahl 900 10000 Konto-Nr. 10050033</Para>
                    <Split as="section">
                      <Address>
                        <Para $mt={14}>Z-0099167-D1-02</Para>
                        <Para $mt={5} $size={5}>d.velop AG<br />Schildarper Str. 6-8</Para>
                        <Para $mt={5} $size={5}>D-48712 Gescher</Para>
                      </Address>
                      <Facts>
                        <Para $mt={13} $size={5}>Rechnung</Para>
                        <FactGrid>
                          <span>Rechnungsmonat</span><span>Rechnungsdatum</span>
                          <span><Mark>Februar 2015</Mark></span><span><Mark>14.02.2015</Mark></span>
                          <span>Rechnungsnummer</span><span>Kundennummer</span>
                          <span><Mark>V - 125625</Mark></span><span><Mark>DD-8230</Mark></span>
                          <span>Für Rückfragen</span><span>Für Störungen</span>
                          <span>06894/55501-0</span><span>06894/55501-0</span>
                        </FactGrid>
                      </Facts>
                    </Split>
                    <Lines>
                      <colgroup><col width="34" /><col width="57" /><col width="50" /><col width="32" /><col /></colgroup>
                      <thead><tr><th>Artikel-Nummer</th><th>Einrichtung Anschluss<br />Telefon und Internet</th><th>Menge / Dauer</th><th>Einzelbetrag</th><th>Gesamt<br />Euro</th></tr></thead>
                      <tbody><tr><td>E-1313</td><td>Telefon<br />Werk 1000<br />1 / 000 / 1000</td><td /><td>500,00</td><td>500,00</td></tr></tbody>
                    </Lines>
                    <Band $mt={22}>Monatliche Grundbeträge</Band>
                    <Band $mt={6}>Internet</Band>
                    <Totals>
                      <dt>Nettogesamtbetrag</dt><dd>500,00</dd>
                      <dt>Umsatzsteuer (19%)</dt><dd>95,00</dd>
                      <dt>Bruttogesamtbetrag</dt><dd>595,00</dd>
                    </Totals>
                    <Small>Der Betrag wird von Ihrem Konto abgebucht</Small>
                  </Paper>
                </div>
                <DocScroll>
                  <DocScrollUp aria-label="Nach oben">
                    <svg width="6" height="4" viewBox="0 0 6 4"><path d="M1 3l2-2 2 2" fill="none" stroke="#555" /></svg>
                  </DocScrollUp>
                </DocScroll>
              </Doc>
            </Preview>
          </Workspace>
        </Screen>

        <WindowControls>
          <ControlButton aria-label="Minimieren"><svg width="7" height="7" viewBox="0 0 7 7"><path d="M1 6h5" stroke="#a9c8ff" /></svg></ControlButton>
          <ControlButton aria-label="Wiederherstellen"><svg width="7" height="7" viewBox="0 0 7 7"><path d="M3 3V1h3v3H4M1 3h3v3H1z" fill="none" stroke="#a9c8ff" /></svg></ControlButton>
          <ControlButton aria-label="Schließen"><svg width="7" height="7" viewBox="0 0 7 7"><path d="M1.500 1.500l4 4M5.500 1.500l-4 4" stroke="#a9c8ff" strokeWidth="1.300" /></svg></ControlButton>
        </WindowControls>
        <Cursor x={95} y={68} />
        <Cursor x={1051} y={258} />
        <Grip viewBox="0 0 3 10" aria-hidden="true"><path d="M1.500 1v1M1.500 3v1M1.500 5v1M1.500 7v1" stroke="#8494a8" /></Grip>
      </Window>
    </>
  );
}
